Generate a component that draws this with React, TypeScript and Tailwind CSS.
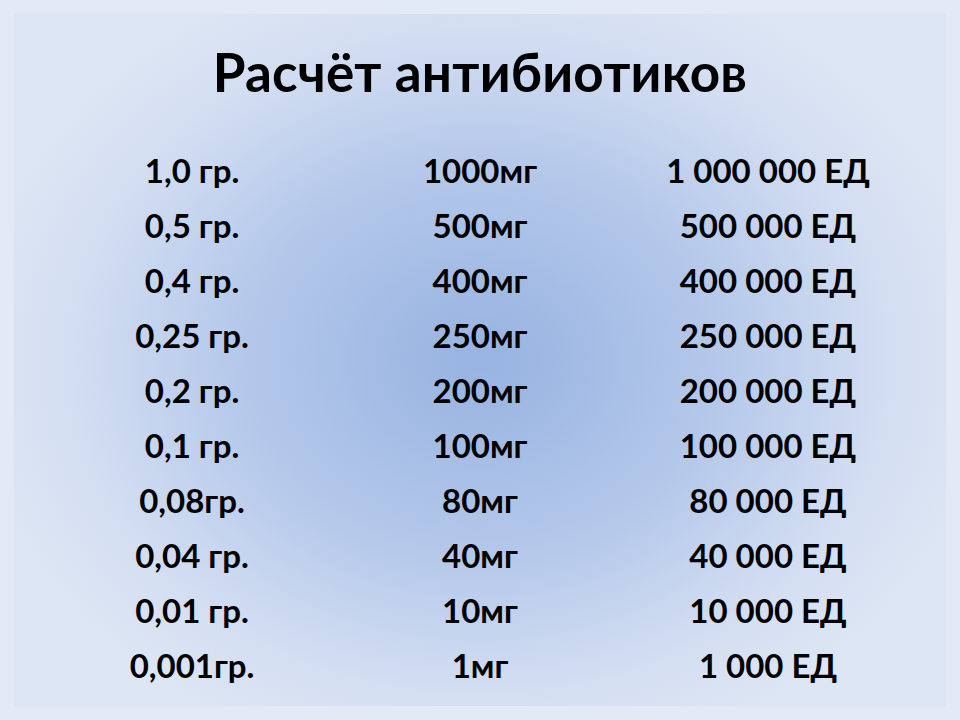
const rows = [
  ['1,0 гр.', '1000мг', '1 000 000 ЕД'],
  ['0,5 гр.', '500мг', '500 000 ЕД'],
  ['0,4 гр.', '400мг', '400 000 ЕД'],
  ['0,25 гр.', '250мг', '250 000 ЕД'],
  ['0,2 гр.', '200мг', '200 000 ЕД'],
  ['0,1 гр.', '100мг', '100 000 ЕД'],
  ['0,08гр.', '80мг', '80 000 ЕД'],
  ['0,04 гр.', '40мг', '40 000 ЕД'],
  ['0,01 гр.', '10мг', '10 000 ЕД'],
  ['0,001гр.', '1мг', '1 000 ЕД'],
]

export default function App() {
  return (
    <div className="w-[960px] h-[720px] bg-[#e3eaf6] p-[14px] font-['Lato','Carlito','Liberation_Sans',sans-serif] text-black">
      <div className="h-full bg-[radial-gradient(ellipse_55%_60%_at_50%_50%,#97b3e1_0%,#b3c7ea_45%,#d3def2_80%,#dde6f4_100%)]">
        <h1 className="pt-[28px] text-center text-[53px] leading-[60px] font-bold tracking-[0.2px]">
          Расчёт антибиотиков
        </h1>
        <div className="mt-[41px] grid grid-cols-3 px-[34px]">
          {rows.map((r, i) => (
            <div key={i} className="contents">
              {r.map((c, j) => (
                <div key={j} className="h-[55px] flex items-center justify-center text-[33px] font-bold">
                  {c}
                </div>
              ))}
            </div>
          ))}
        </div>
      </div>
    </div>
  )
}
